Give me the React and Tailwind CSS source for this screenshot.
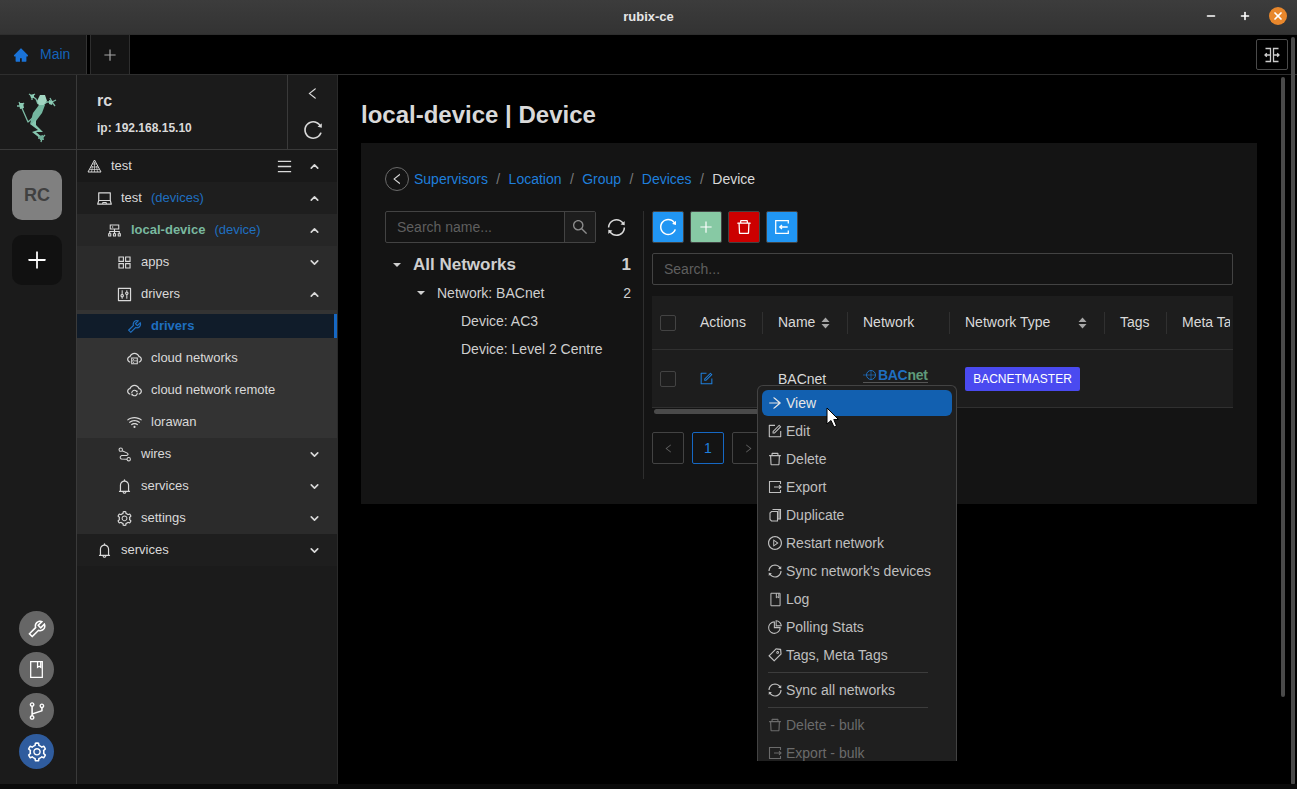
import React from 'react';
import {
  AiFillHome, AiOutlineAppstore, AiOutlineArrowRight, AiOutlineBell, AiOutlineBranches,
  AiOutlineCloudServer, AiOutlineCloudSync, AiOutlineCluster, AiOutlineControl, AiOutlineDelete,
  AiOutlineForm, AiOutlineLaptop, AiOutlineLeft, AiOutlineMenu, AiOutlinePieChart, AiOutlinePlayCircle,
  AiOutlinePlus, AiOutlineReload, AiOutlineRight, AiOutlineSearch, AiOutlineSetting, AiOutlineSync,
  AiOutlineTag, AiOutlineTool, AiOutlineWifi,
} from 'react-icons/ai';
import { ChevronDown, ChevronUp, Minus, Plus, X } from 'lucide-react';

const WiresIcon = ({ size = 15 }) => (
  <svg width={size} height={size} viewBox="0 0 16 16" fill="none" stroke="currentColor" strokeWidth="1.1">
    <circle cx="4" cy="2.8" r="1.8" />
    <circle cx="12.5" cy="13" r="1.8" />
    <path d="M5.5 4 L11 6.5 Q13 8 10.5 9 L5 9 Q2 10.5 4.5 12.8 L10.7 13" />
  </svg>
);

const PyramidIcon = () => (
  <svg width="15" height="14" viewBox="0 0 15 14" fill="none" stroke="currentColor">
    <path d="M7.5 1 L14 13 H1 Z" />
    <path d="M5.5 5 H9.5 M4 8 H11 M3 10.5 H12 M7.5 3 V13 M5.5 7 L4.5 13 M9.5 7 L10.5 13" strokeWidth="0.7" />
  </svg>
);

const SplitIcon = () => (
  <svg width="16" height="16" viewBox="0 0 16 16" fill="none" stroke="currentColor" strokeWidth="1.3">
    <path d="M1.5 1.5 H6.5 V14.5 H1.5 M14.5 1.5 H9.5 V14.5 H14.5" />
    <path d="M6.5 8 H1 M2.8 6.2 L1 8 L2.8 9.8 M9.5 8 H15 M13.2 6.2 L15 8 L13.2 9.8" />
  </svg>
);

const ExportIcon = ({ size = 14 }) => (
  <svg width={size} height={size} viewBox="0 0 14 14" fill="none" stroke="currentColor" strokeWidth="1.1">
    <path d="M12.5 4 V1.5 H1.5 V12.5 H12.5 V10" />
    <path d="M6 7 H13 M11 5.2 L13 7 L11 8.8" />
  </svg>
);

const ImportIcon = ({ size = 16 }) => (
  <svg width={size} height={size} viewBox="0 0 14 14" fill="none" stroke="currentColor" strokeWidth="1.1">
    <path d="M12.5 4 V1.5 H1.5 V12.5 H12.5 V10" />
    <path d="M12 7 H5 M7 5.2 L5 7 L7 8.8" />
  </svg>
);

const DuplicateIcon = () => (
  <svg width="14" height="14" viewBox="0 0 14 14" fill="none" stroke="currentColor" strokeWidth="1.1">
    <path d="M3.5 3.5 H9.5 V13 H3.5 L2 11.5 V5 Z" />
    <path d="M4.5 1.5 H12.5 V11 H9.5 M11 1.5 V11" />
  </svg>
);

const LogIcon = ({ width = 13, height = 15 }) => (
  <svg width={width} height={height} viewBox="0 0 14 18" fill="none" stroke="currentColor" strokeWidth="1.2">
    <path d="M1.5 1.5 H12.5 V16.5 H1.5 Z M8 1.5 V7 L9.5 6 L11 7 V1.5" />
  </svg>
);

// polygon frog, coordinates are pixels of the logo cell
const FrogLogo = () => (
  <svg width="76" height="74" viewBox="0 0 76 74" fill="none">
    <g stroke="#7dbba5" strokeWidth="1.3" strokeLinejoin="round">
      <path d="M38 29 L36 24 L32 21 M29 19 L32 21 L35 19 M32 21 L32 25" />
      <path d="M43 30 L47 27 L52 27 M52 27 L56 25 M52 27 L55 31 M52 27 L50 23" />
      <path d="M21 31 L19 27 M21 31 L17 31 M21 31 L24 28 M21 31 L28 47 L36 40" />
      <path d="M42 63 L41 67 M42 63 L45 60 M42 63 L38 63" />
    </g>
    <polygon points="37,26 40,20 45,20 47,26 43,31 39,31" fill="#a2d6c2" />
    <polygon points="39,30 45,30 42,38 36,46 30,49 33,38" fill="#74b7a0" />
    <polygon points="30,49 36,45 36,50 43,57 36,57 43,63 41,64 32,57 38,55" fill="#86c6af" />
    <polygon points="19,28 23,28 24,33 20,34" fill="#8ccbb4" />
    <polygon points="49,25 53,26 52,30 49,29" fill="#8ccbb4" />
    <polygon points="30,20 34,19 34,23 31,23" fill="#8ccbb4" />
    <polygon points="39,61 43,60 44,65 40,65" fill="#6fae98" />
  </svg>
);

const NavRow = ({ indent, icon, label, note, chevron, bg, labelClass = 'text-[#d9d9d9]', extra }) => (
  <div className={`flex h-8 items-center pr-[16px] ${bg}`} style={{ paddingLeft: indent }}>
    <span className="flex w-[14px] justify-center text-[#d9d9d9] [&>svg]:shrink-0">{icon}</span>
    <span className={`ml-[10px] text-[13px] ${labelClass}`}>{label}</span>
    {note && <span className="ml-[9px] text-[13px] text-[#1f6fc0]">{note}</span>}
    <span className="flex-1" />
    {extra}
    {chevron === 'up' && <ChevronUp size={13} strokeWidth={3} className="text-[#d9d9d9]" />}
    {chevron === 'down' && <ChevronDown size={13} strokeWidth={3} className="text-[#d9d9d9]" />}
  </div>
);

const SubRow = ({ icon, label }) => (
  <div className="flex h-8 items-center pl-[50px]">
    <span className="flex w-[14px] justify-center text-[#d9d9d9] [&>svg]:shrink-0">{icon}</span>
    <span className="ml-[10px] text-[13px] text-[#d9d9d9]">{label}</span>
  </div>
);

const RailButton = ({ children, bg = 'bg-[#666666]' }) => (
  <div className={`flex h-[35px] w-[35px] items-center justify-center rounded-full text-white ${bg}`}>{children}</div>
);

const ToolButton = ({ children, bg }) => (
  <button className={`flex h-8 w-8 items-center justify-center rounded-[2px] border border-[#434343] text-white ${bg}`}>{children}</button>
);

const Checkbox = () => <span className="block h-4 w-4 rounded-[2px] border border-[#434343]" />;

const SortArrows = () => (
  <svg width="9" height="12" viewBox="0 0 9 12" fill="#a6a6a6">
    <path d="M4.5 0.5 L8.5 5 H0.5 Z M0.5 7 H8.5 L4.5 11.5 Z" />
  </svg>
);

const HeadCell = ({ children, first }) => (
  <div className={`flex h-[22px] items-center justify-between pr-[17px] text-[14px] text-[#d9d9d9] whitespace-nowrap ${first ? 'pl-[16px]' : 'border-l border-[#303030] pl-[15px]'}`}>
    {children}
  </div>
);

const MenuItem = ({ icon, label, active, disabled }) => (
  <div
    className={`mb-[2px] flex h-[26px] items-center rounded-md pl-[6px] text-[14px] ${
      active ? 'bg-[#1260b0] text-[#e6e6e6]' : disabled ? 'text-[#6b6b6b]' : 'text-[#bfbfbf]'
    }`}
  >
    <span className="flex w-[14px] justify-center [&>svg]:shrink-0">{icon}</span>
    <span className="ml-[4px]">{label}</span>
  </div>
);

const MenuDivider = () => <div className="mb-[4px] ml-[6px] mr-[24px] mt-[4px] h-px bg-[#3c3c3c]" />;

const Crumb = ({ children }) => <span className="text-[#1f7fdc]">{children}</span>;
const Slash = () => <span className="mx-[8.4px] text-[#7a7a7a]">/</span>;

export default function App() {
  return (
    <div className="relative flex h-[789px] w-full flex-col overflow-hidden bg-black font-['Liberation_Sans',sans-serif]">
      {/* window title */}
      <div className="relative flex h-[34px] items-center justify-center bg-gradient-to-b from-[#3c3c3c] to-[#333333] text-[13px] font-semibold text-[#e6e6e6]">
        rubix-ce
        <div className="absolute right-[10px] top-[7px] flex items-center text-white">
          <Minus size={12} strokeWidth={3.2} />
          <Plus size={12} strokeWidth={3.2} className="ml-[22px]" />
          <span className="ml-[18px] flex h-[18px] w-[18px] items-center justify-center rounded-full bg-[#e8872c]">
            <X size={12} strokeWidth={3.5} />
          </span>
        </div>
      </div>

      {/* tabs */}
      <div className="flex h-[41px] border-y border-[#2e2e2e] bg-black pr-[9px]">
        <div className="flex w-[87px] items-center border-r border-[#333333] bg-[#1a1a1a] pl-[13px] text-[14px] text-[#1464b8]">
          <AiFillHome size={16} className="text-[#1a73d8]" />
          <span className="ml-[11px]">Main</span>
        </div>
        <div className="ml-[3px] flex w-[40px] items-center justify-center border-x border-[#2e2e2e] bg-[#141414] text-[#a6a6a6]">
          <AiOutlinePlus size={16} />
        </div>
        <div className="flex-1" />
        <div className="my-[4px] flex w-[32px] items-center justify-center rounded-[2px] border border-[#4a4a4a] text-[#cccccc]">
          <SplitIcon />
        </div>
      </div>

      {/* body */}
      <div className="flex min-h-0 flex-1">
        {/* icon rail */}
        <div className="flex w-[77px] flex-col items-center border-r border-[#3a3a3a] bg-[#1b1b1b] pr-[2px]">
          <div className="-mr-[2px] flex h-[75px] w-[76px] border-b border-[#3a3a3a]">
            <FrogLogo />
          </div>
          <div className="mt-[20px] flex h-[50px] w-[50px] items-center justify-center rounded-[10px] bg-[#808080] text-[18px] font-bold text-[#404040]">
            RC
          </div>
          <div className="mt-[15px] flex h-[50px] w-[50px] items-center justify-center rounded-[10px] bg-[#111111] text-white">
            <AiOutlinePlus size={24} />
          </div>
          <div className="flex-1" />
          <div className="-ml-[1px] mb-[15px] flex flex-col gap-[6px]">
            <RailButton><AiOutlineTool size={22} /></RailButton>
            <RailButton><LogIcon width={15} height={19} /></RailButton>
            <RailButton><AiOutlineBranches size={22} /></RailButton>
            <RailButton bg="bg-[#2f5c9e]"><AiOutlineSetting size={22} /></RailButton>
          </div>
        </div>

        {/* tree nav */}
        <div className="flex w-[261px] flex-col border-r border-[#2a2a2a] bg-[#1b1b1b]">
          <div className="flex h-[75px] border-b border-[#3a3a3a]">
            <div className="flex-1 pl-[20px] pt-[17px] text-[#d9d9d9]">
              <div className="text-[16px] leading-[18px] font-bold">rc</div>
              <div className="mt-[9px] text-[12px] font-bold">ip: 192.168.15.10</div>
            </div>
            <div className="flex w-[50px] flex-col items-center border-l border-[#3a3a3a] pt-[11px] text-[#d9d9d9]">
              <AiOutlineLeft size={15} />
              <AiOutlineReload size={22} className="mt-[18px]" />
            </div>
          </div>
          <NavRow indent={10} icon={<PyramidIcon />} label="test" chevron="up" bg="bg-[#191919]"
            extra={<AiOutlineMenu size={17} className="mr-[15px] text-[#d9d9d9]" />} />
          <NavRow indent={20} icon={<AiOutlineLaptop size={17} />} label="test" note="(devices)" chevron="up" bg="bg-[#1e1e1e]" />
          <NavRow indent={30} icon={<AiOutlineCluster size={17} />} label="local-device" note="(device)" chevron="up" bg="bg-[#262626]" labelClass="font-bold text-[#79b89f]" />
          <NavRow indent={40} icon={<AiOutlineAppstore size={17} />} label="apps" chevron="down" bg="bg-[#2b2b2b]" />
          <NavRow indent={40} icon={<AiOutlineControl size={17} />} label="drivers" chevron="up" bg="bg-[#2b2b2b]" />
          <div className="bg-[#333333]">
            <div className="flex h-8 items-center py-[4px]">
              <div className="flex h-6 w-full items-center border-r-[3px] border-[#1668c4] bg-[#101c2a] pl-[50px]">
                <span className="flex w-[14px] justify-center text-[#1f6fc0] [&>svg]:shrink-0"><AiOutlineTool size={17} /></span>
                <span className="ml-[10px] text-[13px] font-bold text-[#1f6fc0]">drivers</span>
              </div>
            </div>
            <SubRow icon={<AiOutlineCloudServer size={17} />} label="cloud networks" />
            <SubRow icon={<AiOutlineCloudSync size={17} />} label="cloud network remote" />
            <SubRow icon={<AiOutlineWifi size={17} />} label="lorawan" />
          </div>
          <NavRow indent={40} icon={<WiresIcon />} label="wires" chevron="down" bg="bg-[#2b2b2b]" />
          <NavRow indent={40} icon={<AiOutlineBell size={17} />} label="services" chevron="down" bg="bg-[#2b2b2b]" />
          <NavRow indent={40} icon={<AiOutlineSetting size={17} />} label="settings" chevron="down" bg="bg-[#2b2b2b]" />
          <NavRow indent={20} icon={<AiOutlineBell size={17} />} label="services" chevron="down" bg="bg-[#1e1e1e]" />
        </div>

        {/* main */}
        <div className="min-w-0 flex-1 pl-[23px]">
          <h1 className="mt-[25px] text-[24px] leading-[30px] font-bold text-[#d9d9d9]">local-device | Device</h1>
          <div className="mt-[13px] h-[361px] w-[896px] bg-[#141414] px-[24px] pt-[24px]">
            <div className="flex h-6 items-center text-[14px]">
              <span className="mr-[5px] flex h-6 w-6 items-center justify-center rounded-full border border-[#6a6a6a] text-[#d9d9d9]">
                <AiOutlineLeft size={14} />
              </span>
              <Crumb>Supervisors</Crumb><Slash />
              <Crumb>Location</Crumb><Slash />
              <Crumb>Group</Crumb><Slash />
              <Crumb>Devices</Crumb><Slash />
              <span className="text-[#d9d9d9]">Device</span>
            </div>

            <div className="mt-[20px] flex">
              {/* network tree */}
              <div className="h-[268px] w-[259px] border-r border-[#2e2e2e]">
                <div className="flex items-center">
                  <div className="flex h-8 w-[211px] rounded-[2px] border border-[#434343] text-[14px]">
                    <span className="flex flex-1 items-center pl-[11px] text-[#5f5f5f]">Search name...</span>
                    <span className="flex w-[31px] items-center justify-center border-l border-[#434343] bg-[#1d1d1d] text-[#8c8c8c]">
                      <AiOutlineSearch size={18} />
                    </span>
                  </div>
                  <AiOutlineSync size={21} className="ml-[10px] text-[#d9d9d9]" />
                </div>
                <div className="mt-[8px] w-[246px] text-[#cfcfcf]">
                  <div className="flex h-[28px] items-center pl-[8px]">
                    <span className="h-0 w-0 border-x-[4px] border-t-[4px] border-x-transparent border-t-[#cfcfcf]" />
                    <span className="ml-[12px] flex-1 text-[17px] font-bold">All Networks</span>
                    <span className="text-[17px] font-bold">1</span>
                  </div>
                  <div className="flex h-[28px] items-center pl-[32px] text-[14px]">
                    <span className="h-0 w-0 border-x-[4px] border-t-[4px] border-x-transparent border-t-[#cfcfcf]" />
                    <span className="ml-[12px] flex-1">Network: BACnet</span>
                    <span>2</span>
                  </div>
                  <div className="flex h-[28px] items-center pl-[76px] text-[14px]">Device: AC3</div>
                  <div className="flex h-[28px] items-center pl-[76px] text-[14px]">Device: Level 2 Centre</div>
                </div>
              </div>

              {/* networks table */}
              <div className="ml-[8px] w-[581px]">
                <div className="flex gap-[6px]">
                  <ToolButton bg="bg-[#2196f3]"><AiOutlineReload size={20} /></ToolButton>
                  <ToolButton bg="bg-[#87c9a4]"><AiOutlinePlus size={16} /></ToolButton>
                  <ToolButton bg="bg-[#cc0000]"><AiOutlineDelete size={18} /></ToolButton>
                  <ToolButton bg="bg-[#2196f3]"><ImportIcon /></ToolButton>
                </div>
                <div className="mt-[10px] flex h-8 items-center rounded-[2px] border border-[#434343] pl-[11px] text-[14px] text-[#5f5f5f]">
                  Search...
                </div>
                <div className="mt-[11px] overflow-hidden">
                  <div className="grid h-[53px] grid-cols-[24px_78px_85px_102px_155px_62px_64px] items-center bg-[#1d1d1d] pl-[8px]">
                    <Checkbox />
                    <HeadCell first>Actions</HeadCell>
                    <HeadCell>Name <SortArrows /></HeadCell>
                    <HeadCell>Network</HeadCell>
                    <HeadCell>Network Type <SortArrows /></HeadCell>
                    <HeadCell>Tags</HeadCell>
                    <div className="overflow-hidden"><HeadCell>Meta Tags</HeadCell></div>
                  </div>
                  <div className="grid h-[59px] grid-cols-[24px_78px_85px_102px_155px] items-center border-y border-[#303030] bg-[#1d1d1d] pl-[8px] text-[14px] text-[#d9d9d9]">
                    <Checkbox />
                    <div className="-ml-[1px] pl-[16px] text-[#1f7fdc]"><AiOutlineForm size={15} /></div>
                    <div className="pt-[2px] pl-[16px]">BACnet</div>
                    <div className="-mt-[6px] pl-[16px]">
                      <div className="flex w-[65px] items-center border-b border-[#555555] text-[14px] leading-[14px] font-bold tracking-[-0.3px]">
                        <svg width="14" height="10" viewBox="0 0 14 10" fill="none" stroke="#1f6fc0" strokeWidth="1" className="mr-[1px] shrink-0">
                          <ellipse cx="8" cy="5" rx="4.5" ry="4.5" />
                          <path d="M0 5 H13 M8 1 V9" strokeWidth="0.7" />
                        </svg>
                        <span className="text-[#1f6fc0]">BAC</span>
                        <span className="text-[#5f9a7a]">net</span>
                      </div>
                    </div>
                    <div className="pl-[16px]">
                      <span className="flex h-6 w-[115px] items-center justify-center rounded-[2px] bg-[#4a4af0] text-[12px] text-white">BACNETMASTER</span>
                    </div>
                  </div>
                  <div className="mx-[2px] mt-[1px] h-[5px] w-[110px] rounded-full bg-[#4a4a4a]" />
                </div>
                <div className="mt-[18px] flex gap-[8px] text-[14px]">
                  <span className="flex h-8 w-8 items-center justify-center rounded-[2px] border border-[#434343] text-[#5f5f5f]"><AiOutlineLeft size={11} /></span>
                  <span className="flex h-8 w-8 items-center justify-center rounded-[2px] border border-[#1668c4] text-[#1f7fdc]">1</span>
                  <span className="flex h-8 w-8 items-center justify-center rounded-[2px] border border-[#434343] text-[#5f5f5f]"><AiOutlineRight size={11} /></span>
                </div>
              </div>
            </div>
          </div>
        </div>

        {/* scrollbars */}
        <div className="mr-[6px] mt-[2px] h-[620px] w-[4px] rounded-full bg-[#4a4a4a]" />
        <div className="mr-[2px] -mt-[38px] h-[748px] w-[4px] rounded-full bg-[#4a4a4a]" />
      </div>
      <div className="h-[5px] bg-[#0a0a0a]" />

      {/* dropdown over the table */}
      <div className="absolute left-[757px] top-[385px] h-[376px] w-[200px] overflow-hidden rounded-t-md border-x border-t border-[#434343] bg-[#1f1f1f] px-[4px] pt-[4px]">
        <MenuItem active icon={<AiOutlineArrowRight size={16} />} label="View" />
        <MenuItem icon={<AiOutlineForm size={16} />} label="Edit" />
        <MenuItem icon={<AiOutlineDelete size={16} />} label="Delete" />
        <MenuItem icon={<ExportIcon />} label="Export" />
        <MenuItem icon={<DuplicateIcon />} label="Duplicate" />
        <MenuItem icon={<AiOutlinePlayCircle size={16} />} label="Restart network" />
        <MenuItem icon={<AiOutlineSync size={16} />} label="Sync network's devices" />
        <MenuItem icon={<LogIcon />} label="Log" />
        <MenuItem icon={<AiOutlinePieChart size={16} />} label="Polling Stats" />
        <MenuItem icon={<AiOutlineTag size={16} />} label="Tags, Meta Tags" />
        <MenuDivider />
        <MenuItem icon={<AiOutlineSync size={16} />} label="Sync all networks" />
        <MenuDivider />
        <MenuItem disabled icon={<AiOutlineDelete size={16} />} label="Delete - bulk" />
        <MenuItem disabled icon={<ExportIcon />} label="Export - bulk" />
      </div>

      {/* mouse pointer */}
      <svg className="absolute left-[826px] top-[407px]" width="14" height="22" viewBox="0 0 14 22">
        <path d="M1 1 V17 L5 13.5 L8 20 L10.5 19 L7.8 12.5 H12.5 Z" fill="#ffffff" stroke="#000000" strokeWidth="1" />
      </svg>
    </div>
  );
}
